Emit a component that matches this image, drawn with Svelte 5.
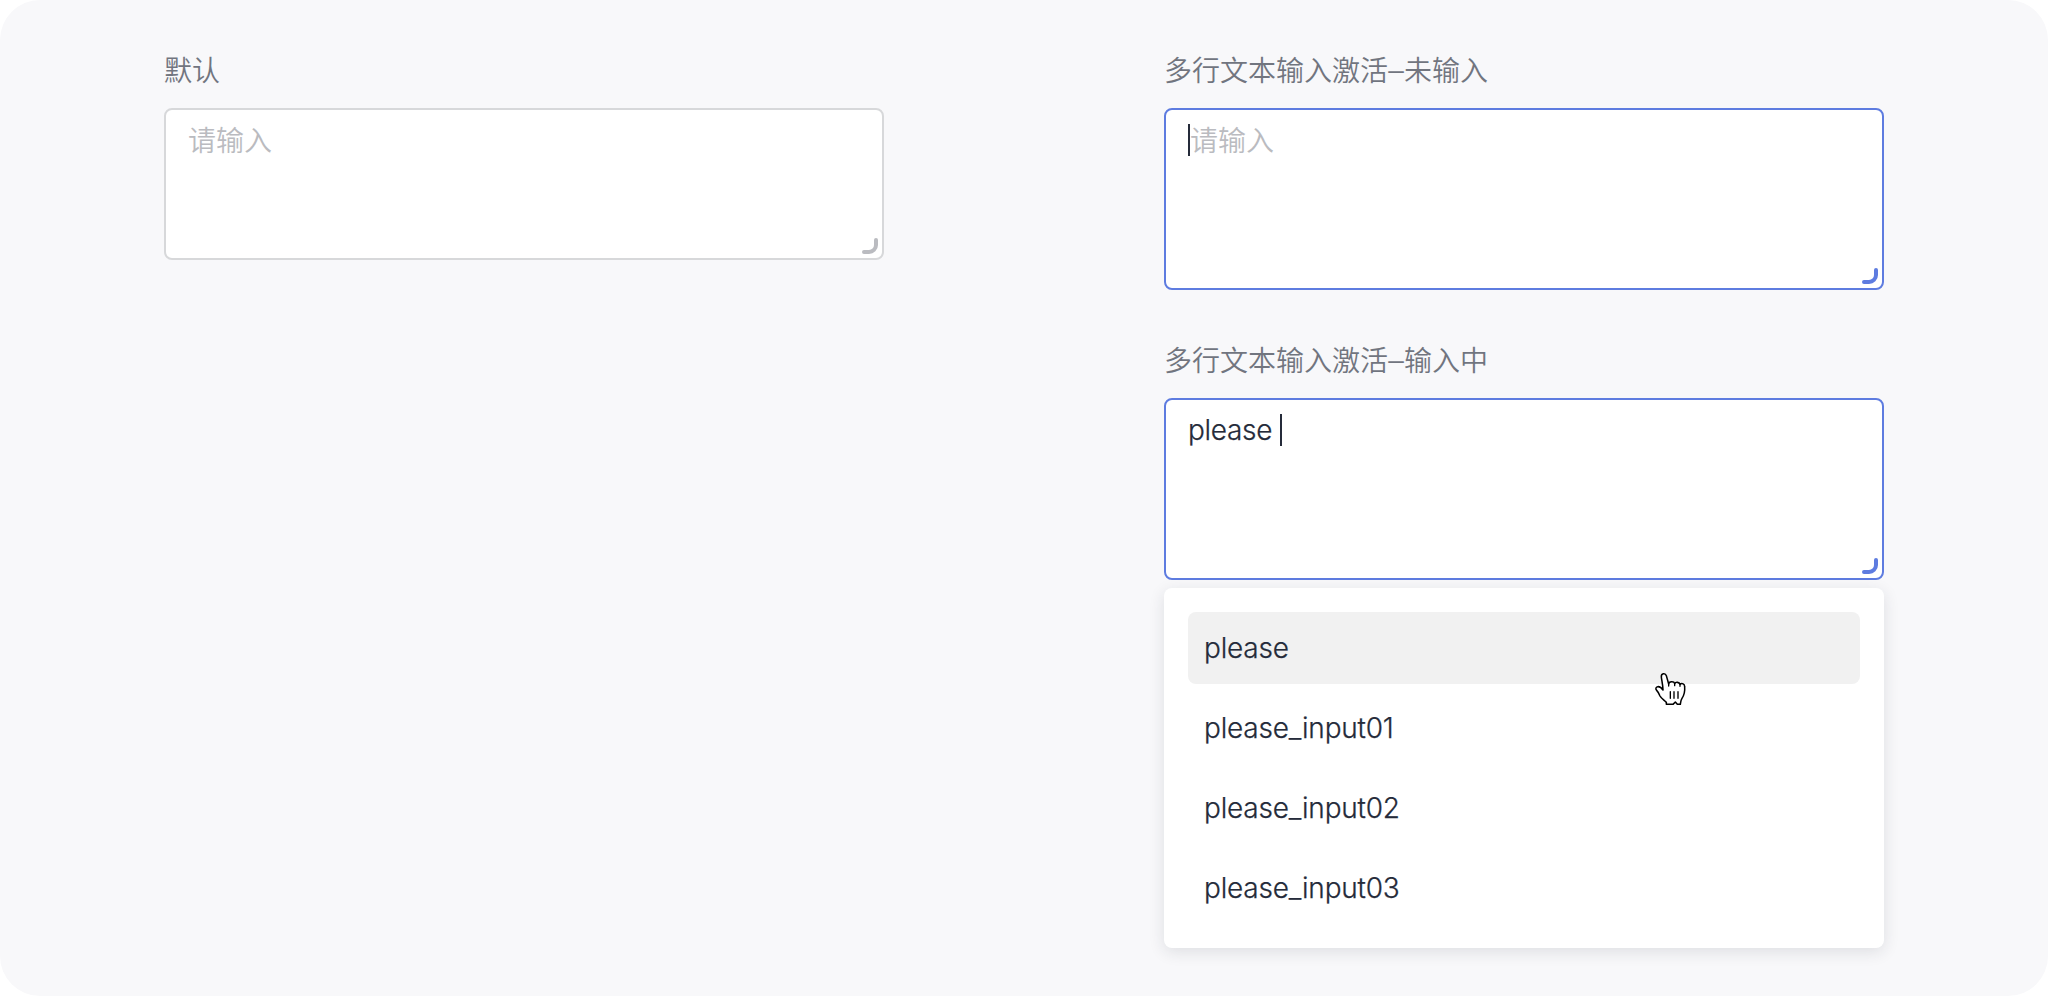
<script>
  const options = ['please', 'please_input01', 'please_input02', 'please_input03'];
</script>

{#snippet grip()}
  <svg class="grip" width="16" height="16" viewBox="0 0 16 16" fill="none" stroke="currentColor" stroke-width="4" stroke-linecap="round">
    <path d="M2 14H7A7 7 0 0 0 14 7V2" />
  </svg>
{/snippet}

<main class="board">
  <section class="column">
    <div class="field">
      <div class="label">默认</div>
      <div class="area">
        <span class="placeholder">请输入</span>
        {@render grip()}
      </div>
    </div>
  </section>

  <section class="column">
    <div class="field">
      <div class="label">多行文本输入激活<span class="dash">–</span>未输入</div>
      <div class="area active">
        <i class="caret"></i><span class="placeholder">请输入</span>
        {@render grip()}
      </div>
    </div>

    <div class="field">
      <div class="label">多行文本输入激活<span class="dash">–</span>输入中</div>
      <div class="area active">
        <span class="value">please</span><i class="caret typed"></i>
        {@render grip()}
      </div>
      <ul class="menu">
        {#each options as option, i}
          <li class:hover={i === 0}>{option}</li>
        {/each}
        <svg class="pointer" width="60" height="60" viewBox="0 0 180 180" fill="#fff" stroke="#000" stroke-width="4.6" stroke-linejoin="round" stroke-linecap="round">
          <path d="M79 133V127C73 121 64 116 60 108C57 101 55 96 50 91C46 87 47 81 53 80C60 79 65 84 69 90C69 76 65 61 64 51C63 39 76 38 79 47L86 72C87 64 102 63 104 71C107 65 118 66 120 73C126 68 134 72 134 80C135 93 133 105 126 115C122 121 122 127 121 133H112L106 126L99 133Z" />
          <path d="M91 95V115M102 95V115M114 95V115M86 72V78M104 71V77M120 73V79" stroke-width="4" />
        </svg>
      </ul>
    </div>
  </section>
</main>

<style>
  :global(body) {
    background: #fff;
  }

  .board {
    box-sizing: border-box;
    height: 996px;
    padding: 50px 164px 48px;
    display: flex;
    justify-content: space-between;
    align-items: flex-start;
    background: #f8f8fa;
    border-radius: 40px;
    font-family: Inter, 'Noto Sans CJK SC', sans-serif;
    font-size: 28px;
    font-weight: 350;
  }

  .column {
    width: 720px;
    display: flex;
    flex-direction: column;
    gap: 50px;
  }

  .field {
    display: flex;
    flex-direction: column;
  }

  .label {
    height: 40px;
    line-height: 38px;
    margin-bottom: 18px;
    color: #71757f;
    white-space: nowrap;
    font-family: 'Noto Sans CJK SC', sans-serif;
  }

  .dash {
    display: inline-block;
    width: 16px;
    line-height: 1;
    text-align: center;
    vertical-align: 2px;
    font-family: 'Liberation Sans', sans-serif;
    font-weight: 400;
  }

  .area {
    box-sizing: border-box;
    position: relative;
    height: 152px;
    padding: 14px 22px;
    display: flex;
    align-items: flex-start;
    line-height: 32px;
    color: #252b3a;
    background: #fff;
    border: 2px solid #d7d8da;
    border-radius: 8px;
  }

  .area.active {
    height: 182px;
    border-color: #5e7ce0;
  }

  .placeholder {
    color: #babbc0;
    line-height: 30px;
    font-family: 'Noto Sans CJK SC', sans-serif;
  }

  .value,
  li {
    font-weight: 300;
    letter-spacing: -0.2px;
    -webkit-text-stroke: 0.25px #252b3a;
  }

  .value {
    width: 84px;
    letter-spacing: -0.3px;
  }

  .caret {
    width: 2px;
    height: 32px;
    background: #252b3a;
  }

  .caret.typed {
    margin-left: 8px;
  }

  .grip {
    position: absolute;
    right: 4px;
    bottom: 4px;
    color: #babbc0;
  }

  .active .grip {
    color: #5e7ce0;
  }

  .menu {
    position: relative;
    list-style: none;
    margin: 8px 0 0;
    padding: 24px;
    display: flex;
    flex-direction: column;
    gap: 8px;
    background: #fff;
    border-radius: 8px;
    box-shadow: 0 4px 16px rgba(37, 43, 58, 0.12);
  }

  li {
    height: 72px;
    line-height: 72px;
    padding: 0 16px;
    border-radius: 8px;
    color: #252b3a;
  }

  li.hover {
    background: #f1f1f1;
  }

  .pointer {
    position: absolute;
    left: 476px;
    top: 72px;
  }
</style>
